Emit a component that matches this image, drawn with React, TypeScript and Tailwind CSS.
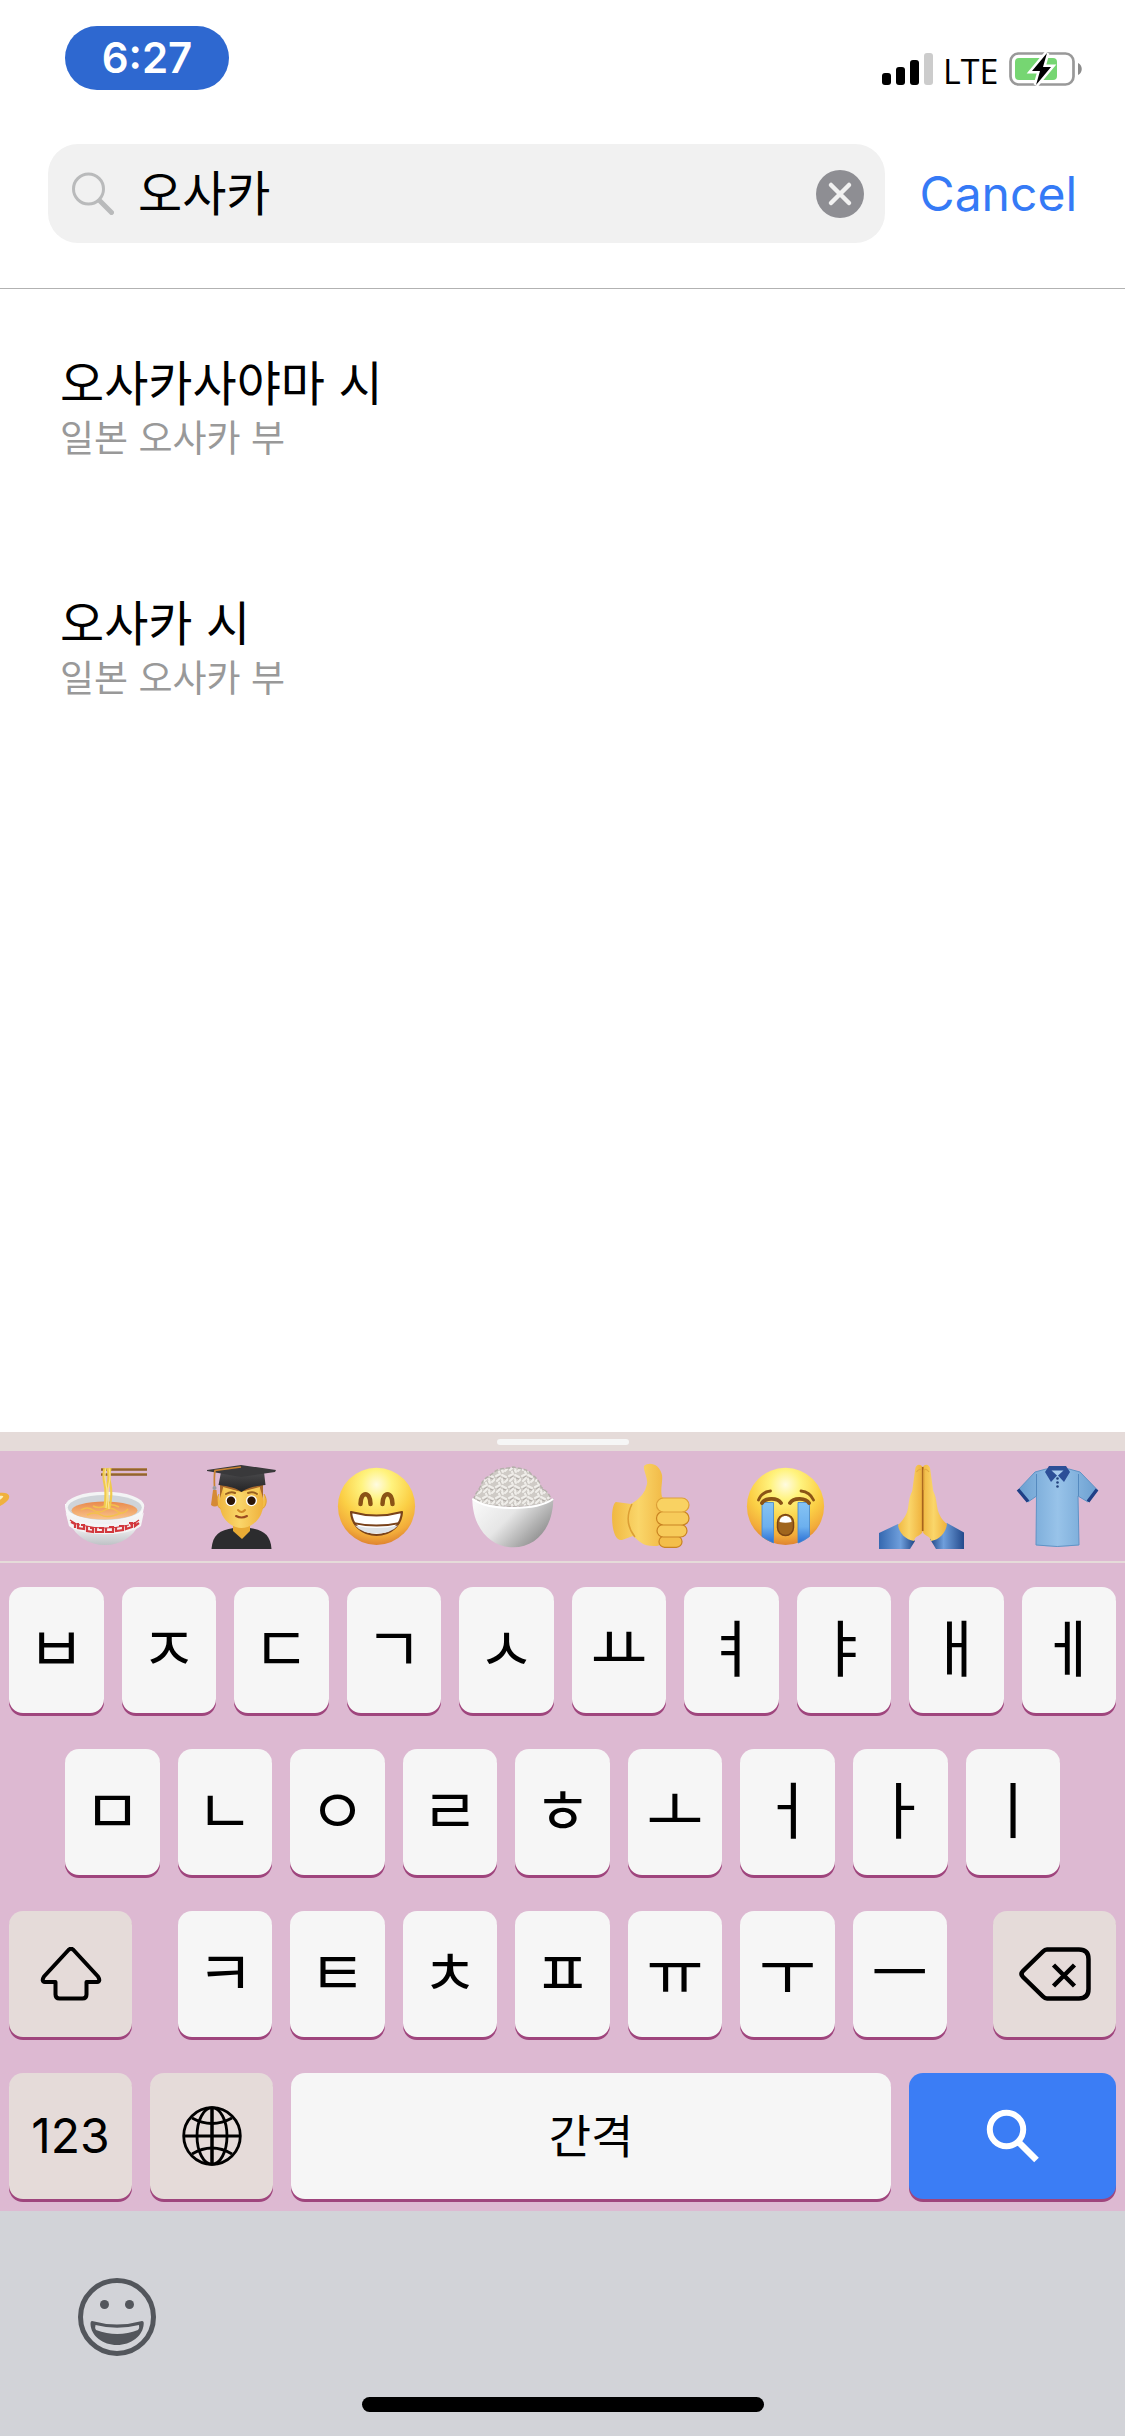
import { useState, type ReactNode } from "react";

const sans = "font-['Inter','Noto_Sans_CJK_KR',sans-serif]";

function StatusIcons() {
  return (
    <svg width="200" height="34" viewBox="0 0 200 34" role="img" aria-label="Signal LTE, battery charging" className="block">
      <rect x="0" y="21" width="9" height="12" rx="3" />
      <rect x="14" y="15" width="9" height="18" rx="3" />
      <rect x="28" y="8" width="9" height="25" rx="3" />
      <rect x="42" y="1" width="9" height="32" rx="3" fill="#cccccc" />
      <rect x="128.500" y="1.500" width="63" height="31" rx="8" fill="#fff" stroke="#999" strokeWidth="2.700" />
      <rect x="133" y="6" width="42" height="22" rx="4" fill="#76d672" />
      <path d="M196 11c5 2 5 10 0 12z" fill="#8c8c8c" />
      <path d="M165 1 150 19h8l-4 14 15-18h-8z" fill="#000" stroke="#fff" strokeWidth="5" paintOrder="stroke" />
    </svg>
  );
}

function Emoji({ label, children }: { label: string; children: ReactNode }) {
  return (
    <button type="button" aria-label={label} className="flex w-[136px] shrink-0 justify-center">
      <svg width="88" height="88" viewBox="0 0 88 88" aria-hidden="true">
        {children}
      </svg>
    </button>
  );
}

function EmojiDefs() {
  return (
    <svg width="0" height="0" className="absolute" aria-hidden="true">
      <defs>
        <radialGradient id="face" cx="50%" cy="22%" r="78%">
          <stop offset="0" stopColor="#fffbe0" />
          <stop offset="0.25" stopColor="#fff37e" />
          <stop offset="0.6" stopColor="#fbcf45" />
          <stop offset="0.85" stopColor="#f2ab3a" />
          <stop offset="1" stopColor="#df8430" />
        </radialGradient>
        <linearGradient id="skin" x1="0" x2="1">
          <stop offset="0" stopColor="#f0b842" />
          <stop offset="0.45" stopColor="#fad66a" />
          <stop offset="1" stopColor="#efb13c" />
        </linearGradient>
        <linearGradient id="bowl" x1="0" x2="1" y2="0.6">
          <stop offset="0" stopColor="#fbfbfb" />
          <stop offset="0.5" stopColor="#e6e6e6" />
          <stop offset="1" stopColor="#8f8f8f" />
        </linearGradient>
        <linearGradient id="china" x1="0" x2="0" y2="1">
          <stop offset="0" stopColor="#ffffff" />
          <stop offset="0.6" stopColor="#ebecee" />
          <stop offset="1" stopColor="#bfc2c6" />
        </linearGradient>
        <linearGradient id="soup" x1="0" x2="0" y2="1">
          <stop offset="0" stopColor="#e98a4c" />
          <stop offset="1" stopColor="#f9c48c" />
        </linearGradient>
        <linearGradient id="tear" x1="0" x2="0" y2="1">
          <stop offset="0" stopColor="#86c3f3" />
          <stop offset="0.6" stopColor="#6cb0ee" />
          <stop offset="1" stopColor="#2a6fd4" />
        </linearGradient>
        <linearGradient id="cloth" x1="0" x2="1">
          <stop offset="0" stopColor="#6b9fd0" />
          <stop offset="0.5" stopColor="#98c3e9" />
          <stop offset="1" stopColor="#6b9fd0" />
        </linearGradient>
        <linearGradient id="cap" x1="0" x2="0" y2="1">
          <stop offset="0" stopColor="#4a4a4c" />
          <stop offset="1" stopColor="#232325" />
        </linearGradient>
        <linearGradient id="sleeve" x1="0" x2="1">
          <stop offset="0" stopColor="#3568b0" />
          <stop offset="0.6" stopColor="#6f9fdc" />
          <stop offset="1" stopColor="#1f4585" />
        </linearGradient>
        <linearGradient id="sleeveR" x1="1" x2="0">
          <stop offset="0" stopColor="#234a8c" />
          <stop offset="0.6" stopColor="#6f9fdc" />
          <stop offset="1" stopColor="#1f4585" />
        </linearGradient>
        <pattern id="grains" width="13" height="11" patternUnits="userSpaceOnUse">
          <rect width="13" height="11" fill="#cfcbc6" />
          <path d="M1 3l4-2M7 2l4 2M2 8l3-3M7 6l1 4M10 9l3-3M4 10l2-1" stroke="#f0eeea" strokeWidth="2" strokeLinecap="round" />
          <path d="M2 5l3-2M8 5l3 1M5 8l1 2" stroke="#a39e99" strokeWidth="0.700" />
        </pattern>
      </defs>
    </svg>
  );
}

function EmojiStrip() {
  return (
    <div className="flex h-[110px] items-center justify-end overflow-hidden">
      <EmojiDefs />
      <Emoji label="Croissant">
        <path d="M50 30c16 2 20 0 30 1 6 1 5 6 1 9-7 6-18 9-28 12z" fill="#f0b13e" />
        <path d="M56 36c10 0 16-3 22-2 2 1-8 8-20 11z" fill="#fbf0c0" />
      </Emoji>
      <Emoji label="Noodles">
        <path d="M4 42c1 24 17 41 40 41s38-17 39-41z" fill="url(#china)" />
        <ellipse cx="43.800" cy="44" rx="39.500" ry="14.300" fill="#f3f4f5" />
        <ellipse cx="43.800" cy="45.500" rx="37" ry="12.500" fill="#cfd4d9" />
        <ellipse cx="43.500" cy="48.500" rx="33" ry="9" fill="url(#soup)" />
        <path d="M20 48q6-4 12 0t12 0 12 1 11-2M26 53q8-4 14 0t20-2M32 44q6 3 12 0t14 1" fill="none" stroke="#f3c04d" strokeWidth="1.500" />
        <path d="M4.500 50c8 16 70 16 78.500 0l-3 14c-14 11-58 11-72 0z" fill="#f4f4f5" />
        <path d="M10 60l4 2v4M17 61v5l6 1v-4h-3M26 64v5l6 1v-4h-3M35 65v5h7v-4h-4M45 66v4h7v-5h-4M55 65v4l7-1v-4h-4M65 63v4l6-2v-4h-3M74 60v4l4-3" fill="none" stroke="#d2383d" strokeWidth="2.200" />
        <path d="M9 58q5 4 10 5M20 63q24 6 48 0M69 63q6-2 9-5" fill="none" stroke="#d2383d" strokeWidth="1.200" />
        <path d="M40 7.500h46M40 12.500h46" stroke="#8c5c2a" strokeWidth="2.600" />
        <path d="M40 6.700h46M40 11.700h46" stroke="#b98a4e" strokeWidth="0.800" />
        <path d="M43.500 6q-2 8 0 16t0 24M46.500 6q2 8 0 16t0 25M49.500 6q-2 9 0 17t-1 23" fill="none" stroke="#f0ca4c" strokeWidth="2.200" />
        <path d="M45 6q-2 8 0 16t0 24M48 6q2 8 0 16t0 25" fill="none" stroke="#fbe58c" strokeWidth="1.200" />
      </Emoji>
      <Emoji label="Student">
        <path d="M14.500 87c1-14 8-19 22-21h16c14 2 21 7 22 21z" fill="#2c2c2e" />
        <path d="M36 60h17v9l-8 8-9-8z" fill="#e9ab35" />
        <path d="M22 32c-4 6-2 13 2 15M67 32c4 6 2 13-2 15" fill="#f3bd45" stroke="#e2a02f" strokeWidth="1" />
        <path d="M23 20h43v23c0 13-11 23-21.500 23S23 56 23 43z" fill="url(#skin)" />
        <path d="M23 22v14l3-10 18 4 19-4 3 10V20z" fill="#a8682a" />
        <path d="M26 25l18 5 19-5-1 8-17-3-18 3z" fill="#f7cb58" />
        <path d="M29 32q5-3 9-1M51 31q5-2 9 1" fill="none" stroke="#9a6020" strokeWidth="2" strokeLinecap="round" />
        <circle cx="34" cy="38.700" r="5.500" fill="#fff" />
        <circle cx="54.500" cy="38.700" r="5.500" fill="#fff" />
        <circle cx="34" cy="38.700" r="4.200" fill="#2c1608" />
        <circle cx="54.500" cy="38.700" r="4.200" fill="#2c1608" />
        <path d="M41 48q3.500 4 7 0" fill="none" stroke="#d08a28" strokeWidth="2" strokeLinecap="round" />
        <path d="M39 54q5.500 3 11 0" fill="none" stroke="#9a4a20" strokeWidth="2" strokeLinecap="round" />
        <path d="M24 10h43l1.500 13c-6 1-16 1-24 7-8-6-18-6-23-7z" fill="url(#cap)" />
        <path d="M10 8l34-5 35 5-1 2-34 5L10 9z" fill="#39393b" />
        <path d="M44 5L18 8.500q-1 6-.5 16" fill="none" stroke="#c98332" strokeWidth="1.700" />
        <circle cx="17.500" cy="26" r="2" fill="#9b9b9b" />
        <path d="M16 28h3.500l1.500 15q-3 3-7 0z" fill="#d58a35" />
      </Emoji>
      <Emoji label="Grinning face">
        <circle cx="43.500" cy="44.300" r="38.600" fill="url(#face)" />
        <path d="M27.500 42c0-13 10-13 10 0M49.500 42c0-13 10-13 10 0" fill="none" stroke="#8a5316" strokeWidth="4.500" strokeLinecap="round" />
        <path d="M18 50q25.500 7 51 0c-1 14-12 23-25.500 23S19 64 18 50z" fill="#fff" stroke="#7a431a" strokeWidth="2.200" strokeLinejoin="round" />
        <path d="M20 60q23 5 47 0l-1 2q-22 5-45 0z" fill="#7a431a" />
        <path d="M22 63.500q21 5 43 0-7 8-21.500 8T22 63.500z" fill="#dfe3e6" />
      </Emoji>
      <Emoji label="Rice bowl">
        <path d="M5 38c0-6 5-9 7-15 3-8 8-8 12-12 6-6 14-4 20-6 7 2 14 1 18 7 6 4 9 8 10 13 5 4 9 7 10 13-12 9-66 9-77 0z" fill="url(#grains)" stroke="#b5b0ab" strokeWidth="1.500" strokeDasharray="4 2" />
        <path d="M3.300 36c16 12 64 12 81 0 0 30-17 49.300-40 49.300S3.300 66 3.300 36z" fill="url(#bowl)" />
        <path d="M3.600 37c16 12 64 12 80.500 0" fill="none" stroke="#fff" strokeWidth="2" />
      </Emoji>
      <Emoji label="Thumbs up">
        <path d="M11 40q8 1 15 2 14-8 16-20c1-6-4-14-3-18 5-5 16-2 18 9 1 7-2 14 0 22l9 5-2 40-12 4c-14 1-18-5-24-10l-11 4c-12 2-12-36-6-38z" fill="url(#skin)" />
        <path d="M27 42q-9 18 3 33" fill="none" stroke="#dc9e34" strokeWidth="1.500" />
        <rect x="54" y="74" width="23" height="11.300" rx="5.600" fill="#f3be4a" stroke="#c98322" strokeWidth="1.200" />
        <rect x="52" y="62.500" width="30" height="12.500" rx="6.200" fill="#f7cb5a" stroke="#c98322" strokeWidth="1.200" />
        <rect x="51.500" y="49.500" width="32.500" height="13.500" rx="6.700" fill="#f7cb5a" stroke="#c98322" strokeWidth="1.200" />
        <rect x="51.500" y="36" width="32.500" height="14" rx="7" fill="#f9d262" stroke="#dda038" strokeWidth="1.200" />
      </Emoji>
      <Emoji label="Loudly crying face">
        <circle cx="44.500" cy="44.300" r="38.600" fill="url(#face)" />
        <path d="M21 40.500h11.500V81l-2 -1Q25 77.500 21 74.500zM57 40.500h11.500v34Q64 78 58.500 80.500L57 81z" fill="url(#tear)" stroke="#3f86d3" strokeWidth="0.800" />
        <path d="M21 41c3-5 15-6 19 0M49 41c4-6 16-5 19 0" fill="none" stroke="#8a5316" strokeWidth="3.800" strokeLinecap="round" />
        <path d="M17.500 38q3-8 12-9M60 29q9 1 12.500 9" fill="none" stroke="#8a5316" strokeWidth="2.800" strokeLinecap="round" />
        <rect x="36.500" y="52.500" width="16" height="21" rx="8" fill="#a0651d" stroke="#7c4514" strokeWidth="1.500" />
        <path d="M38.500 60c0-8 12-8 12 0-4 1-8 1-12 0z" fill="#fff" />
      </Emoji>
      <Emoji label="Folded hands">
        <path d="M2 71l19-9 17 17-5 8H2z" fill="url(#sleeve)" />
        <path d="M87 70.500L70 61 53 77l6 10h28z" fill="url(#sleeveR)" />
        <path d="M45.700 5c-3-4-7-2-7.500 2l-3 22c-3 6-3 10-4 16-1 8-6 14-10.200 18 1 8 8 15 16 16 1-6 8-5 8.700-10z" fill="url(#skin)" />
        <path d="M45.700 5c3-4 7-2 7.500 2l3 22c3 6 3 10 4 16 1 8 6 14 9.800 17-1 9-8 16-16 17-1-6-8-5-8.300-10z" fill="url(#skin)" />
        <path d="M45.700 5v64" stroke="#a8631c" strokeWidth="1.700" />
        <path d="M39.500 10q3-4 5-2v20M52 10q-3-4-5-2v20" fill="none" stroke="#e3aa40" strokeWidth="1.200" />
      </Emoji>
      <Emoji label="Polo shirt">
        <path d="M33 7L22 10 5 28l10 12 8.500-6L23 83q21 3 43 0l-1-49 10 6 9.500-12L67 10 56 7z" fill="url(#cloth)" stroke="#5f93c6" strokeWidth="1" />
        <path d="M23.500 12v22M65.500 12v22" stroke="#558abf" strokeWidth="1" />
        <path d="M5 27.500l10 12M84 27.500l-9 12" stroke="#1f3f86" strokeWidth="3.400" />
        <path d="M36 4h17l4 6-6 10-6.500-7-6.500 7-6-10z" fill="#2c4f97" />
        <path d="M38.500 8.500h12L44.500 14z" fill="#a9cdee" />
        <g fill="#24437e">
          <circle cx="44.500" cy="16.500" r="1.300" />
          <circle cx="44.500" cy="20.500" r="1.300" />
          <circle cx="44.500" cy="24.500" r="1.300" />
        </g>
      </Emoji>
    </div>
  );
}

const keyBase = "flex h-[126px] items-center justify-center rounded-[14px] shadow-[0_3px_0_#9f457d]";

function LetterKey({ label }: { label: string }) {
  return (
    <button type="button" className={`${keyBase} min-w-0 flex-1 bg-[#f6f6f6] text-[62px] leading-none`}>
      {label}
    </button>
  );
}

function Keyboard() {
  return (
    <section aria-label="Keyboard" className="bg-[#ddb9d2]">
      <div className="flex h-[19px] items-center justify-center bg-[#e5dbd9]">
        <div className="h-[6px] w-[132px] rounded-full bg-[#f6f6f6]" />
      </div>
      <EmojiStrip />
      <div className="h-[2px] bg-[#e5dbd9]" />
      <div className="flex flex-col gap-9 px-[9px] pt-6 pb-3">
        <div className="flex gap-[18px]">
          {[..."ㅂㅈㄷㄱㅅㅛㅕㅑㅐㅔ"].map((k) => <LetterKey key={k} label={k} />)}
        </div>
        <div className="flex gap-[18px] px-14">
          {[..."ㅁㄴㅇㄹㅎㅗㅓㅏㅣ"].map((k) => <LetterKey key={k} label={k} />)}
        </div>
        <div className="flex gap-[46px]">
          <button type="button" aria-label="Shift" className={`${keyBase} w-[123px] bg-[#e5dbd9]`}>
            <svg width="62" height="54" viewBox="0 0 62 54" fill="none" stroke="#000" strokeWidth="4" strokeLinejoin="round" aria-hidden="true">
              <path d="M28.500 3Q31 .500 33.500 3L58 29.500Q61 34.500 57 35H46.500V47.500Q46.500 51.500 42.500 51.500h-23Q15.500 51.500 15.500 47.500V35H5Q1 34.500 4 29.500z" />
            </svg>
          </button>
          <div className="flex min-w-0 flex-1 gap-[18px]">
            {[..."ㅋㅌㅊㅍㅠㅜㅡ"].map((k) => <LetterKey key={k} label={k} />)}
          </div>
          <button type="button" aria-label="Delete" className={`${keyBase} w-[123px] bg-[#e5dbd9]`}>
            <svg width="72" height="54" viewBox="0 0 72 54" fill="none" stroke="#000" strokeWidth="4.500" strokeLinejoin="round" aria-hidden="true">
              <path d="M28 2.500H60Q69.500 2.500 69.500 12V42Q69.500 51.500 60 51.500H28Q26 51.500 24 49.500L4 30Q1 27 4 24L24 4.500Q26 2.500 28 2.500z" />
              <path d="M34.500 18l21 21M55.500 18l-21 21" />
            </svg>
          </button>
        </div>
        <div className="flex gap-[18px]">
          <button type="button" className={`${keyBase} w-[123px] bg-[#e5dbd9] text-[48px] leading-none`}>123</button>
          <button type="button" aria-label="Next keyboard" className={`${keyBase} w-[123px] bg-[#e5dbd9]`}>
            <svg width="60" height="60" viewBox="0 0 60 60" fill="none" stroke="#000" strokeWidth="2.800" aria-hidden="true">
              <circle cx="30" cy="30" r="28.300" />
              <ellipse cx="30" cy="30" rx="15" ry="28.300" />
              <path d="M30 2v56" strokeWidth="3.500" />
              <path d="M2 30h56M10 12q20 11 40 0M10 48q20-12 40 0" />
            </svg>
          </button>
          <button type="button" className={`${keyBase} flex-1 bg-[#f6f6f6] text-[46px] leading-none`}>간격</button>
          <button type="button" aria-label="Search" className={`${keyBase} w-[207px] bg-[#3b7df5]`}>
            <svg width="54" height="54" viewBox="0 0 54 54" fill="none" stroke="#fff" aria-hidden="true">
              <circle cx="20.500" cy="20.500" r="16.700" strokeWidth="6" />
              <path d="M33 33.500L50.500 51" strokeWidth="6.500" />
            </svg>
          </button>
        </div>
      </div>
    </section>
  );
}

const results = [
  { name: "오사카사야마 시", region: "일본 오사카 부" },
  { name: "오사카 시", region: "일본 오사카 부" },
];

export default function App() {
  const [query, setQuery] = useState("오사카");
  return (
    <div className={`flex min-h-screen w-full flex-col bg-white text-black ${sans}`}>
      <header className="flex items-start justify-between pt-[26px] pr-[43px] pl-[65px]">
        <div className="flex h-16 w-[164px] items-center justify-center rounded-full bg-[#2e68d0] text-[42px] leading-none font-semibold text-white">
          6:27
        </div>
        <div className="relative mt-[26px]">
          <StatusIcons />
          <span className="absolute top-0 left-[61px] font-['Open_Sans',sans-serif] text-[34px] leading-[38px] font-medium">LTE</span>
        </div>
      </header>

      <form role="search" onSubmit={(e) => e.preventDefault()} className="mt-[54px] flex items-center gap-[35px] px-12">
        <div className="flex h-[99px] min-w-0 flex-1 items-center rounded-[30px] bg-[#f1f1f1] pr-[21px] pl-6">
          <svg width="42" height="43" viewBox="0 0 42 43" fill="none" stroke="#b9babb" aria-hidden="true">
            <circle cx="16.500" cy="17" r="15" strokeWidth="3" />
            <path d="M28 29L39.500 40.500" strokeWidth="5" strokeLinecap="round" />
          </svg>
          <input
            type="text"
            aria-label="Search city"
            value={query}
            onChange={(e) => setQuery(e.target.value)}
            className="ml-6 h-[72px] min-w-0 flex-1 bg-transparent text-[48px] leading-[72px] outline-none"
          />
          <button type="button" aria-label="Clear text" onClick={() => setQuery("")}>
            <svg width="48" height="48" viewBox="0 0 48 48" aria-hidden="true" className="block">
              <circle cx="24" cy="24" r="24" fill="#8e8e93" />
              <path d="M15 15l18 18M33 15L15 33" stroke="#f1f1f1" strokeWidth="4.500" strokeLinecap="round" />
            </svg>
          </button>
        </div>
        <button type="button" className="text-[48px] leading-none text-[#357af6]">Cancel</button>
      </form>

      <main className="mt-[45px] flex-1 border-t border-[#b2b2b2]">
        <ul className="flex flex-col pt-16 pl-[60px]">
          {results.map((r) => (
            <li key={r.name} className="h-60">
              <a href="#" className="block">
                <span className="block text-[48px] leading-[62px]">{r.name}</span>
                <span className="block text-[37px] leading-[48px] text-[#999]">{r.region}</span>
              </a>
            </li>
          ))}
        </ul>
      </main>

      <Keyboard />

      <footer className="bg-[#d2d3d8]">
        <div className="pt-[67px] pl-[78px]">
          <button type="button" aria-label="Emoji" className="block">
            <svg width="78" height="78" viewBox="0 0 78 78" aria-hidden="true">
              <circle cx="39" cy="39" r="36.500" fill="none" stroke="#53565c" strokeWidth="5" />
              <circle cx="26.500" cy="26.500" r="4.500" fill="#53565c" />
              <circle cx="51.500" cy="26.500" r="4.500" fill="#53565c" />
              <path d="M14 43q25 7 50 0 2 0 1.700 3C65 58 53 67 39 67S13 58 12.500 46q0-3 1.500-3z" fill="#53565c" />
              <path d="M17.500 47q21.500 5.500 43.500 0 .8 3-1 5-20.500 8-42 0-1.500-2-.5-5z" fill="#d2d3d8" />
            </svg>
          </button>
        </div>
        <div className="mx-auto mt-[41px] mb-6 h-[15px] w-[402px] rounded-full bg-black" />
      </footer>
    </div>
  );
}
